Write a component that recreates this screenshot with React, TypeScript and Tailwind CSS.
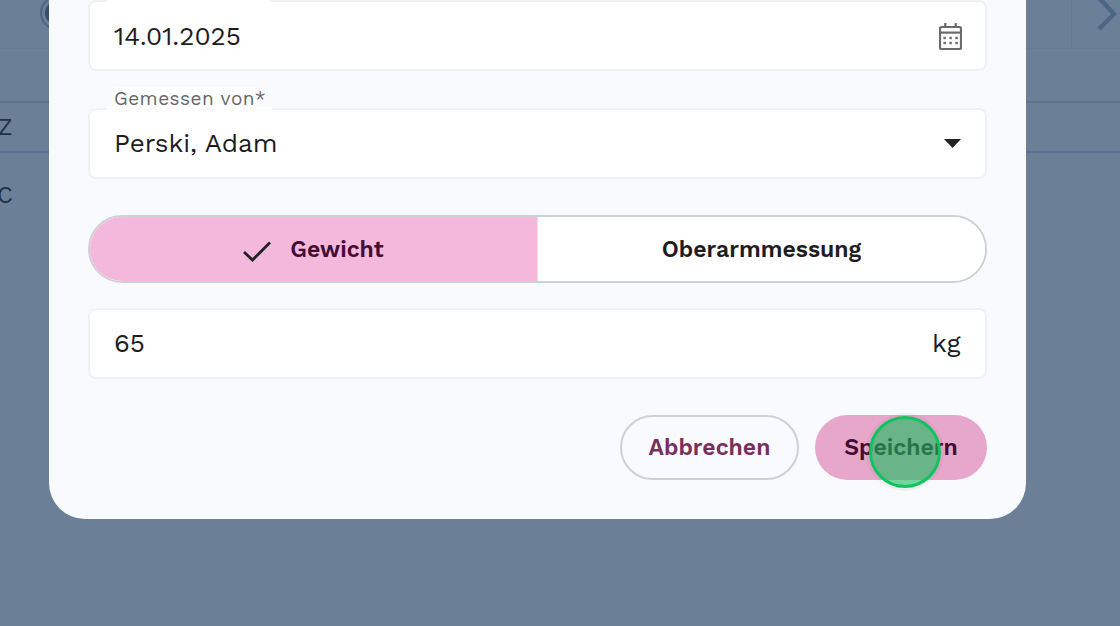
import React from "react";

const font = { fontFamily: '"Work Sans", Inter, "Liberation Sans", sans-serif' };

function Field({ children, className = "" }: { children: React.ReactNode; className?: string }) {
  return (
    <div className={`relative flex h-[71px] items-center justify-between rounded-[8px] border-2 border-[#f0f1f5] bg-white pl-[24px] pr-[24px] text-[26px] text-[#1d1d1f] ${className}`}>
      {children}
    </div>
  );
}

export default function App() {
  return (
    <div className="relative h-[626px] w-[1120px] overflow-hidden bg-[#6b7f96] text-[#1f3147]" style={font}>
      {/* page behind the dialog */}
      <div className="absolute inset-0 flex flex-col">
        <div className="flex h-[49px] justify-end border-b border-[#667a91]">
          <div className="flex w-[49px] items-start border-l border-[#667a91]">
            <svg width="22" height="34" viewBox="0 0 22 34" className="ml-[24px]" fill="none" stroke="#4d6684" strokeWidth="4.5">
              <path d="M2 -3 L18 14 L3 29" />
            </svg>
          </div>
        </div>
        <div className="h-[54px] border-b-2 border-[#5c7290]" />
        <div className="flex h-[50px] items-center border-b-2 border-[#5c7290] text-[23px]">
          <span className="-ml-[2px] translate-y-[1px]">Z</span>
        </div>
        <div className="flex h-[86px] items-center text-[23px]">
          <span className="-ml-[3px]">C</span>
        </div>
      </div>
      <div className="absolute left-[40px] -top-[4px] flex h-[34px] w-[34px] items-center justify-center rounded-full border-2 border-[#4d6684]">
        <div className="h-[24px] w-[24px] rounded-full bg-[#35506f]" />
      </div>

      {/* dialog */}
      <div className="absolute bottom-[107px] left-[49px] flex w-[977px] flex-col rounded-b-[36px] bg-[#f9fafe] pb-[39px] pl-[39px] pr-[39px]">
        <Field>
          <span className="absolute -top-[2px] left-[17px] h-[3px] w-[163px] bg-white" />
          <span className="translate-y-[1px]">14.01.2025</span>
          <svg width="23" height="27" viewBox="0 0 23 27" fill="none" className="-mr-[1px] translate-y-[1px]">
            <rect x="1" y="4" width="21" height="22" rx="1.5" stroke="#6a6a6a" strokeWidth="2.2" />
            <path d="M1 9.6h21" stroke="#6a6a6a" strokeWidth="2.2" />
            <path d="M6.3 0v5M16.7 0v5" stroke="#6a6a6a" strokeWidth="2.2" />
            <g fill="#6a6a6a">
              <rect x="4.4" y="13.8" width="2.4" height="2.4" />
              <rect x="10.4" y="13.8" width="2.4" height="2.4" />
              <rect x="16.4" y="13.8" width="2.4" height="2.4" />
              <rect x="4.4" y="18.8" width="2.4" height="2.4" />
              <rect x="10.4" y="18.8" width="2.4" height="2.4" />
              <rect x="16.4" y="18.8" width="2.4" height="2.4" />
            </g>
          </svg>
        </Field>

        <Field className="mt-[37px]">
          <span className="absolute -top-[3px] left-[17px] h-[4px] w-[165px] bg-white" />
          <span className="absolute -top-[22px] left-[24px] text-[19px] leading-[22px] tracking-[0.45px] text-[#666]">
            <span className="bg-white">Gemessen von</span>*
          </span>
          <span>Perski, Adam</span>
          <svg width="17" height="9" viewBox="0 0 17 9">
            <path d="M0 0h17L8.5 9z" fill="#222" />
          </svg>
        </Field>

        <div className="mt-[36px] flex h-[68px] overflow-hidden rounded-full border-2 border-[#cfd0d6] text-[23px] font-semibold">
          <div className="flex w-[448px] items-center justify-center gap-[19px] border-r border-[#e3e3e8] bg-[#f3b8db] text-[#430c33]">
            <svg width="28" height="21" viewBox="0 0 28 21" fill="none" stroke="#222" strokeWidth="2.8" className="mt-[4px]">
              <path d="M1 11 L9.5 19 L27 1.5" />
            </svg>
            <span className="translate-y-[1px]">Gewicht</span>
          </div>
          <div className="flex flex-1 items-center justify-center bg-white text-[#1d1d1f]">
            <span className="translate-y-[1px]">Oberarmmessung</span>
          </div>
        </div>

        <Field className="mt-[25px]">
          <span>65</span>
          <span className="-translate-x-[0.5px]">kg</span>
        </Field>

        <div className="mt-[36px] flex justify-end gap-[16px] text-[23px] font-semibold">
          <div className="flex h-[65px] w-[179px] items-center justify-center rounded-full border-2 border-[#cfd0d6] text-[#772f5c]">
            <span className="translate-y-[1px]">Abbrechen</span>
          </div>
          <div className="flex h-[65px] w-[172px] items-center justify-center rounded-full bg-[#e6a7cb] text-[#430c33]">
            <span className="translate-y-[1px]">Speichern</span>
          </div>
        </div>
      </div>

      {/* click marker */}
      <div className="absolute left-[869px] top-[416px] h-[72px] w-[72px] rounded-full border-[3px] border-[#0fc35e] bg-[#17bc5f]/60 shadow-[0_0_0_3px_rgba(120,80,100,0.07)]" />
    </div>
  );
}
